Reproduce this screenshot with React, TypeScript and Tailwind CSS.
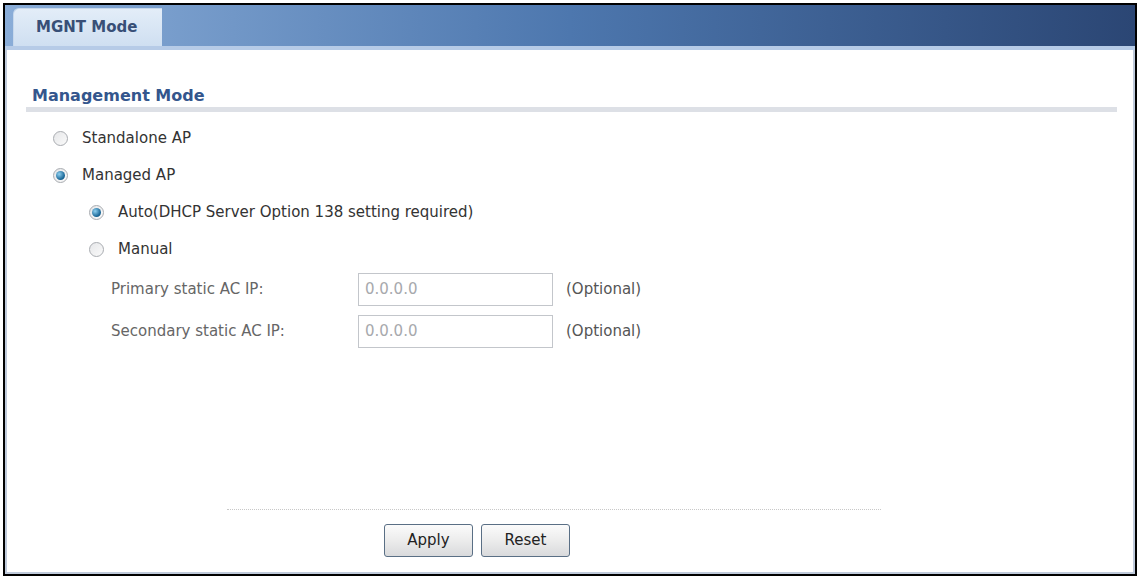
import React from "react"

function Radio({ checked }: { checked?: boolean }) {
  return (
    <span className="relative inline-flex h-[15px] w-[15px] shrink-0 items-center justify-center rounded-full border border-[#a9acb1] bg-gradient-to-br from-[#e6e7e9] to-[#fafafa]">
      {checked && (
        <span className="h-[9px] w-[9px] rounded-full bg-[radial-gradient(circle_at_35%_35%,#8fd0f0,#1a6797_65%,#0f4a70)]" />
      )}
    </span>
  )
}

function RadioRow({ label, checked, indent }: { label: string; checked?: boolean; indent: string }) {
  return (
    <div className={`flex h-[37px] items-center gap-[14px] ${indent}`}>
      <Radio checked={checked} />
      <span className="text-[#333]">{label}</span>
    </div>
  )
}

function IpRow({ label }: { label: string }) {
  return (
    <div className="flex h-[42px] items-center pl-[104px]">
      <span className="w-[247px] whitespace-nowrap text-[#666]">{label}</span>
      <div className="flex h-[33px] w-[195px] items-center border border-[#c3c6cb] bg-white px-[6px] text-[#a7a9ad]">
        0.0.0.0
      </div>
      <span className="ml-[13px] text-[#555]">(Optional)</span>
    </div>
  )
}

export default function App() {
  return (
    <div className="h-[578px] w-[1140px] bg-white pb-[2px] pl-[3px] pr-[3px] pt-[3px] font-['DejaVu_Sans',sans-serif] text-[15px]">
      <div className="flex h-full flex-col border-2 border-black">
        {/* tab bar */}
        <div className="flex h-[41px] items-end bg-gradient-to-r from-[#8aadd8] via-[#4d77ae] to-[#2b4674] pl-[8px]">
          <div className="flex h-[38px] w-[149px] items-center rounded-tl-[6px] border-l border-t border-[#c7d8ec] bg-gradient-to-b from-[#e3edf8] to-[#cfdff1] pl-[22px] text-[15px] font-bold text-[#384f77]">
            MGNT Mode
          </div>
        </div>
        <div className="h-[4px] bg-[#b6cbe7]" />

        <div className="flex flex-1 flex-col border-x-2 border-b-2 border-[#bfcadb]">
          <div className="ml-[19px] mr-[16px] mt-[36px]">
            <div className="pl-[6px] text-[16px] font-bold leading-[20px] text-[#34568d]">Management Mode</div>
            <div className="mt-[1px] h-[5px] bg-[#dde0e6]" />
          </div>

          <div className="mt-[8px]">
            <RadioRow label="Standalone AP" indent="pl-[46px]" />
            <RadioRow label="Managed AP" checked indent="pl-[46px]" />
            <RadioRow label="Auto(DHCP Server Option 138 setting required)" checked indent="pl-[82px]" />
            <RadioRow label="Manual" indent="pl-[82px]" />
          </div>

          <div>
            <IpRow label="Primary static AC IP:" />
            <IpRow label="Secondary static AC IP:" />
          </div>

          <div className="flex-1" />

          <div className="ml-[220px] w-[654px] border-t border-dotted border-[#c8c8c8]" />
          <div className="mb-[15px] mt-[14px] flex gap-[8px] pl-[377px]">
            <button className="h-[33px] w-[89px] rounded-[3px] border border-[#5a6f85] bg-gradient-to-b from-[#fbfbfb] via-[#ececec] to-[#d9dadc] text-[#222]">
              Apply
            </button>
            <button className="h-[33px] w-[89px] rounded-[3px] border border-[#5a6f85] bg-gradient-to-b from-[#fbfbfb] via-[#ececec] to-[#d9dadc] text-[#222]">
              Reset
            </button>
          </div>
        </div>
      </div>
    </div>
  )
}
